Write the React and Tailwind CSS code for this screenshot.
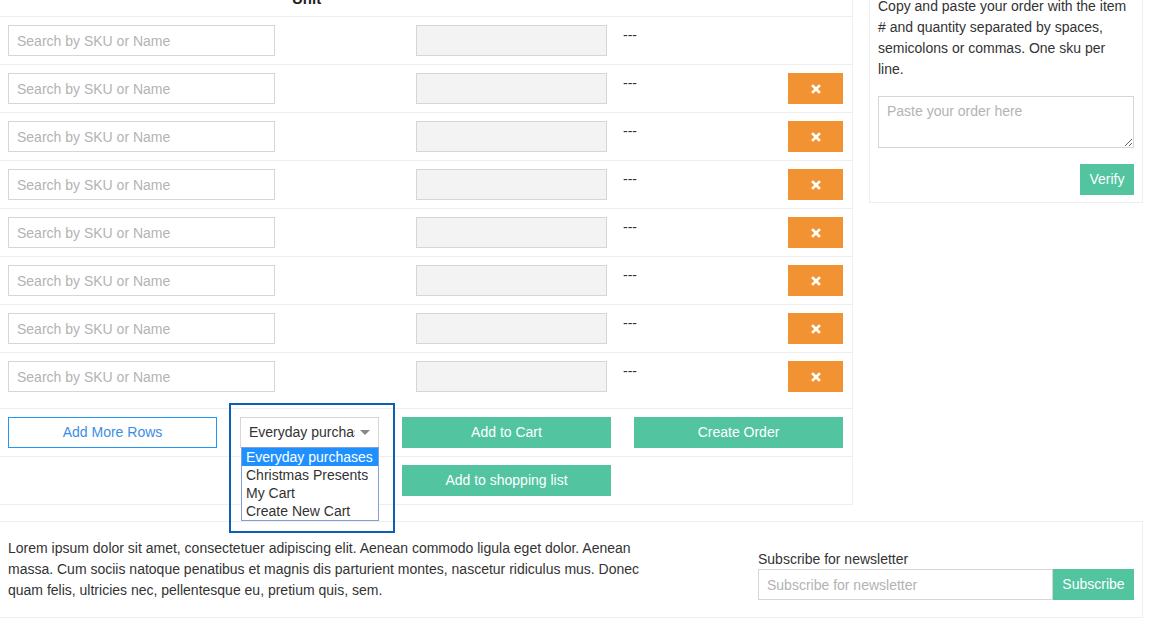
import React from 'react';

const font = "font-['Liberation_Sans',Arial,sans-serif]";

function RemoveIcon() {
  return (
    <svg width="10" height="10" viewBox="0 0 10 10" fill="none">
      <path d="M2 2L8 8M8 2L2 8" stroke="#fff" strokeWidth="2.6" strokeLinecap="square" />
    </svg>
  );
}

function ItemRow({ removable, last }) {
  return (
    <div className={`flex border-b border-[#eee] ${last ? 'pb-[8px]' : ''}`}>
      <div className="w-[283px] p-[8px]">
        <input
          placeholder="Search by SKU or Name"
          className="w-[267px] h-[31px] border border-[#d6d6d6] px-[8px] text-[14px] text-[#333] placeholder:text-[#b3b3b3] outline-none"
        />
      </div>
      <div className="w-[125px] p-[8px]" />
      <div className="w-[207px] p-[8px]">
        <div className="w-[191px] h-[31px] border border-[#d6d6d6] bg-[#f3f3f3]" />
      </div>
      <div className="w-[165px] p-[8px] leading-[20px] text-[#333]">---</div>
      <div className="w-[72px] p-[8px]">
        {removable && (
          <button className="w-[55px] h-[31px] bg-[#f29333] flex items-center justify-center">
            <RemoveIcon />
          </button>
        )}
      </div>
    </div>
  );
}

const carts = ['Everyday purchases', 'Christmas Presents', 'My Cart', 'Create New Cart'];

export default function App() {
  return (
    <div className={`relative w-[1152px] h-[633px] overflow-hidden bg-white text-[14px] text-[#333] ${font}`}>
      <div className="flex items-start">
        <div className="w-[853px] border-r border-b border-[#eee]">
          <div className="h-[17px] border-b border-[#eee] flex">
            <div className="w-[283px]" />
            <div className="pl-[9px] mt-[-11px] leading-[20px] text-[15px] font-bold text-[#222]">Unit</div>
          </div>
          {Array.from({ length: 8 }).map((_, i) => (
            <ItemRow key={i} removable={i > 0} last={i === 7} />
          ))}
          <div className="flex gap-[23px] px-[8px] py-[8px] border-b border-[#eee]">
            <button className="w-[209px] h-[31px] border border-[#2196f3] text-[#3a8ee6] text-[14px]">Add More Rows</button>
            <div className="relative w-[139px] h-[31px] border border-[#d6d6d6] flex items-center pl-[8px] pr-[8px]">
              <span className="w-[106px] whitespace-nowrap overflow-hidden text-[#333]">Everyday purchases</span>
              <span className="ml-auto w-0 h-0 border-l-[5px] border-r-[5px] border-t-[5px] border-l-transparent border-r-transparent border-t-[#888]" />
              <div className="absolute left-[0px] top-[29px] w-[138px] border border-[#7f9fd6] bg-white z-10">
                {carts.map((c, i) => (
                  <div
                    key={c}
                    className={`h-[18px] leading-[18px] pl-[4px] whitespace-nowrap ${i === 0 ? 'bg-[#1e90ff] text-white' : 'text-[#333]'}`}
                  >
                    {c}
                  </div>
                ))}
              </div>
            </div>
            <button className="w-[209px] h-[31px] bg-[#52c49f] text-white text-[14px]">Add to Cart</button>
            <button className="w-[209px] h-[31px] bg-[#52c49f] text-white text-[14px]">Create Order</button>
          </div>
          <div className="flex px-[8px] py-[8px]">
            <div className="w-[371px]" />
            <button className="ml-[23px] w-[209px] h-[31px] bg-[#52c49f] text-white text-[14px]">Add to shopping list</button>
          </div>
        </div>

        <div className="ml-[16px] mt-[-13px] w-[274px] border border-[#eee] px-[8px] pt-[8px] pb-[7px]">
          <p className="leading-[21px] text-[#333]">
            Copy and paste your order with the item # and quantity separated by spaces, semicolons or commas. One sku per line.
          </p>
          <textarea
            placeholder="Paste your order here"
            className="mt-[16px] block w-[256px] h-[52px] border border-[#d6d6d6] px-[8px] py-[4px] text-[14px] placeholder:text-[#b3b3b3] outline-none"
          />
          <div className="mt-[16px] flex justify-end">
            <button className="w-[54px] h-[31px] bg-[#52c49f] text-white text-[14px]">Verify</button>
          </div>
        </div>
      </div>

      <div className="mt-[16px] w-[1143px] border-t border-r border-b border-[#eee] flex items-end justify-between px-[8px] pt-[16px] pb-[16px]">
        <p className="w-[640px] leading-[21px] text-[#333]">
          Lorem ipsum dolor sit amet, consectetuer adipiscing elit. Aenean commodo ligula eget dolor. Aenean massa. Cum sociis natoque penatibus et magnis dis parturient montes, nascetur ridiculus mus. Donec quam felis, ultricies nec, pellentesque eu, pretium quis, sem.
        </p>
        <div className="w-[376px] mb-[1px]">
          <div className="leading-[20px] text-[#333]">Subscribe for newsletter</div>
          <div className="flex">
            <input
              placeholder="Subscribe for newsletter"
              className="flex-1 min-w-0 h-[31px] border border-[#d6d6d6] px-[8px] text-[14px] placeholder:text-[#b3b3b3] outline-none"
            />
            <button className="w-[81px] h-[31px] bg-[#52c49f] text-white text-[14px]">Subscribe</button>
          </div>
        </div>
      </div>

      <div className="absolute left-[229px] top-[403px] w-[166px] h-[130px] border-2 border-[#0b60b3] pointer-events-none" />
    </div>
  );
}
